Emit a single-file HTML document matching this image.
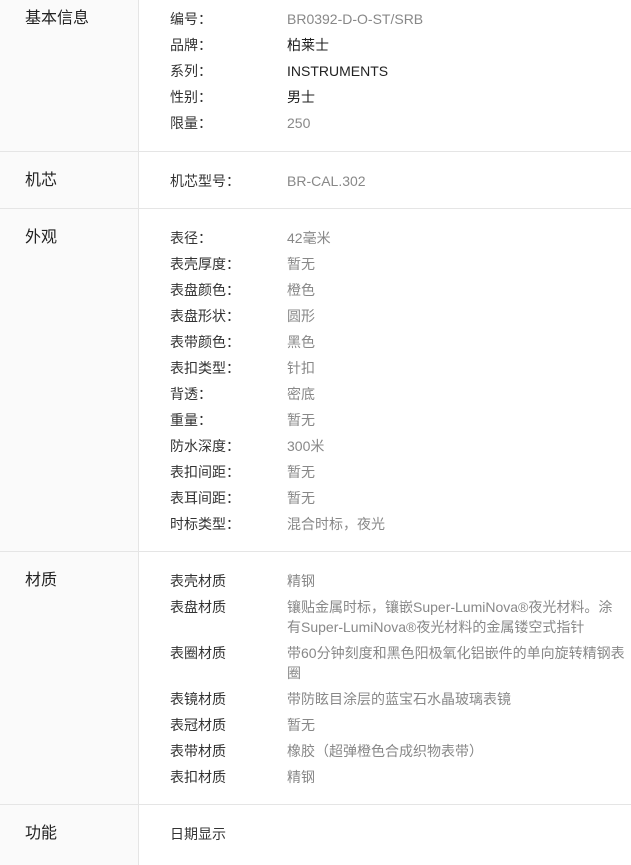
<!DOCTYPE html>
<html><head><meta charset="utf-8"><style>
*{margin:0;padding:0;box-sizing:border-box}
body{width:631px;height:850px;overflow:hidden;background:#fff;font-family:"Liberation Sans","Noto Sans CJK SC",sans-serif;font-size:14px;color:#333}
.sec{display:flex;border-bottom:1px solid #e5e5e5}
.l{width:139px;background:#fafafa;border-right:1px solid #e5e5e5;padding-left:25px;font-size:16px;color:#222}
.r{flex:1}
.row{display:flex;min-height:26px;line-height:26px}
.k{width:148px;padding-left:31px;flex:none}
.v{width:338px;color:#888}
.v.wrap{line-height:20px;padding-top:3px;padding-bottom:3px}
.d{color:#222}
</style></head><body>
<div class="sec" style="height:152px"><div class="l" style="padding-top:6px;line-height:26px">基本信息</div><div class="r" style="padding-top:6px">
<div class="row"><div class="k">编号：</div><div class="v">BR0392-D-O-ST/SRB</div></div>
<div class="row"><div class="k">品牌：</div><div class="v d">柏莱士</div></div>
<div class="row"><div class="k">系列：</div><div class="v d">INSTRUMENTS</div></div>
<div class="row"><div class="k">性别：</div><div class="v d">男士</div></div>
<div class="row"><div class="k">限量：</div><div class="v">250</div></div>
</div></div>
<div class="sec" style="height:57px"><div class="l" style="padding-top:16px;line-height:26px">机芯</div><div class="r" style="padding-top:16px">
<div class="row"><div class="k">机芯型号：</div><div class="v">BR-CAL.302</div></div>
</div></div>
<div class="sec" style="height:343px"><div class="l" style="padding-top:16px;line-height:26px">外观</div><div class="r" style="padding-top:16px">
<div class="row"><div class="k">表径：</div><div class="v">42毫米</div></div>
<div class="row"><div class="k">表壳厚度：</div><div class="v">暂无</div></div>
<div class="row"><div class="k">表盘颜色：</div><div class="v">橙色</div></div>
<div class="row"><div class="k">表盘形状：</div><div class="v">圆形</div></div>
<div class="row"><div class="k">表带颜色：</div><div class="v">黑色</div></div>
<div class="row"><div class="k">表扣类型：</div><div class="v">针扣</div></div>
<div class="row"><div class="k">背透：</div><div class="v">密底</div></div>
<div class="row"><div class="k">重量：</div><div class="v">暂无</div></div>
<div class="row"><div class="k">防水深度：</div><div class="v">300米</div></div>
<div class="row"><div class="k">表扣间距：</div><div class="v">暂无</div></div>
<div class="row"><div class="k">表耳间距：</div><div class="v">暂无</div></div>
<div class="row"><div class="k">时标类型：</div><div class="v">混合时标，夜光</div></div>
</div></div>
<div class="sec" style="height:253px"><div class="l" style="padding-top:16px;line-height:26px">材质</div><div class="r" style="padding-top:16px">
<div class="row"><div class="k">表壳材质</div><div class="v">精钢</div></div>
<div class="row"><div class="k">表盘材质</div><div class="v wrap">镶贴金属时标，镶嵌Super-LumiNova®夜光材料。涂有Super-LumiNova®夜光材料的金属镂空式指针</div></div>
<div class="row"><div class="k">表圈材质</div><div class="v wrap">带60分钟刻度和黑色阳极氧化铝嵌件的单向旋转精钢表圈</div></div>
<div class="row"><div class="k">表镜材质</div><div class="v">带防眩目涂层的蓝宝石水晶玻璃表镜</div></div>
<div class="row"><div class="k">表冠材质</div><div class="v">暂无</div></div>
<div class="row"><div class="k">表带材质</div><div class="v">橡胶（超弹橙色合成织物表带）</div></div>
<div class="row"><div class="k">表扣材质</div><div class="v">精钢</div></div>
</div></div>
<div class="sec" style="height:60px;border-bottom:none"><div class="l" style="padding-top:16px;line-height:26px">功能</div><div class="r" style="padding-top:16px">
<div class="row"><div class="k">日期显示</div><div class="v"></div></div>
</div></div>
</body></html>
